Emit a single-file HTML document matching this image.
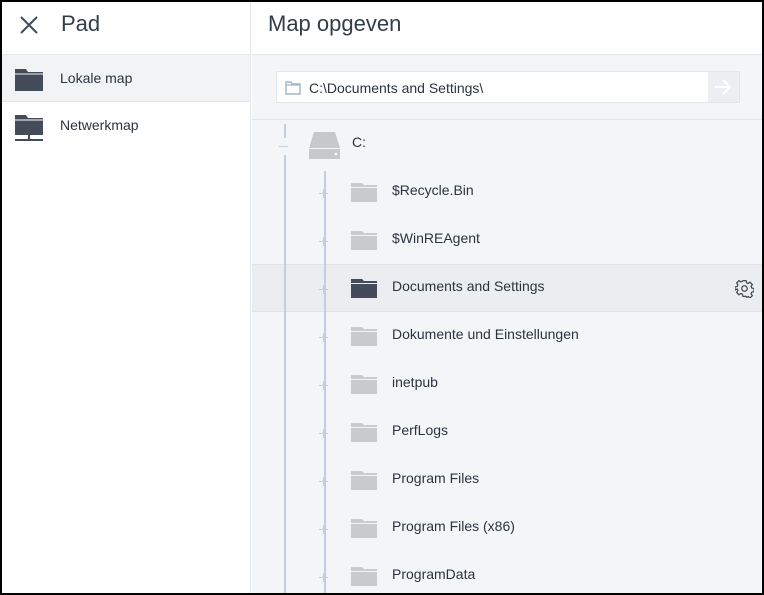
<!DOCTYPE html><html><head><style>
*{margin:0;padding:0;box-sizing:border-box}
body{width:764px;height:595px;overflow:hidden;background:#000;font-family:"Liberation Sans",sans-serif;color:#2a3440}
#w{position:absolute;left:2px;top:2px;width:760px;height:591px;background:#fff;overflow:hidden}
#l{position:absolute;left:0;top:0;width:249px;height:591px;background:#fff;border-right:1px solid #e2e5e9}
#r{position:absolute;left:250px;top:0;width:510px;height:591px;background:#f4f5f7}
.h{height:53px;border-bottom:1px solid #e2e5e9;background:#fff;position:relative}
.ttl{position:absolute;top:9px;font-size:22px;color:#333d48}
.li{height:47px;border-bottom:1px solid #e2e5e9;position:relative;font-size:14px}
.li span{position:absolute;left:58px;top:15px}
.row{position:absolute;left:0;width:510px;height:48px;font-size:14px}
.row span{position:absolute;left:140px;top:14px}
.fo{position:absolute;left:99px;top:15px;width:26px;height:19px}
.plus{position:absolute;left:67px;top:21px;width:9px;height:9px;z-index:3}
.plus:before{content:"";position:absolute;left:4px;top:0;width:1px;height:9px;background:#c3cee0}
.plus:after{content:"";position:absolute;left:0;top:4px;width:9px;height:1px;background:#c3cee0}
.ln{position:absolute;background:#c3cee0;z-index:2}
</style></head><body><div id="w">
<div id="l">
<div class="h"><svg style="position:absolute;left:17px;top:13px" width="20" height="20" viewBox="0 0 20 20"><path d="M2 2L18 18M18 2L2 18" stroke="#434c57" stroke-width="2"/></svg><div class="ttl" style="left:59px">Pad</div></div>
<div class="li" style="background:#f2f3f5"><svg style="position:absolute;left:12px;top:13px" width="30" height="24" viewBox="0 0 30 24"><path d="M1 1h11l2 3h15v19H1z" fill="#434c58"/><path d="M1 6h28" stroke="#f2f3f5" stroke-width="1"/></svg><span>Lokale map</span></div>
<div class="li" style="border:none"><svg style="position:absolute;left:12px;top:12px" width="30" height="28" viewBox="0 0 30 28"><path d="M1 1h11l2 3h15v17H1z" fill="#434c58"/><path d="M1 6h28" stroke="#fff"/><path d="M15 21v4M1 26h28" stroke="#434c58" stroke-width="2"/></svg><span>Netwerkmap</span></div>
</div>
<div id="r">
<div class="h"><div class="ttl" style="left:16px">Map opgeven</div></div>
<div style="position:absolute;left:0;top:53px;width:510px;height:65px;border-bottom:1px solid #e0e3e7">
<div style="position:absolute;left:24px;top:16px;width:464px;height:32px;background:#fff;border:1px solid #e2e5e9">
<svg style="position:absolute;left:8px;top:9px" width="16" height="14" viewBox="0 0 16 14"><path d="M1 1h5l1 2h8v10H1z" fill="none" stroke="#9fb3cf" stroke-width="1.4"/><path d="M1 4h14" stroke="#9fb3cf" stroke-width="1.2"/></svg>
<span style="position:absolute;left:32px;top:8px;font-size:14px">C:\Documents and Settings\</span>
<div style="position:absolute;right:0;top:0;width:31px;height:30px;background:#eceef1"><svg style="position:absolute;left:6px;top:6px" width="18" height="18" viewBox="0 0 18 18"><path d="M1 9h15M9 2l7 7-7 7" fill="none" stroke="#fff" stroke-width="2"/></svg></div>
</div></div>
<div class="ln" style="left:32px;top:122px;width:2px;height:14px"></div>
<div class="ln" style="left:27px;top:144px;width:9px;height:1px"></div>
<div class="ln" style="left:32px;top:153px;width:2px;height:440px"></div>
<div class="ln" style="left:72px;top:169px;width:2px;height:424px"></div>
<div class="row" style="top:118px"><svg style="position:absolute;left:56px;top:12px" width="33" height="27" viewBox="0 0 33 27"><path d="M6 0h21l5 16H1z" fill="#c6c8cc"/><rect x="1" y="17" width="31" height="10" fill="#c6c8cc"/><circle cx="28" cy="22" r="1.3" fill="#fff"/></svg><span style="left:100px">C:</span></div>
<div class="row" style="top:166px"><div class="plus"></div><svg class="fo" viewBox="0 0 26 19"><path d="M0 0h11l2 2h13v17H0z" fill="#c8cacd"/><path d="M0 4.5h26" stroke="#f4f5f7"/></svg><span>$Recycle.Bin</span></div>
<div class="row" style="top:214px"><div class="plus"></div><svg class="fo" viewBox="0 0 26 19"><path d="M0 0h11l2 2h13v17H0z" fill="#c8cacd"/><path d="M0 4.5h26" stroke="#f4f5f7"/></svg><span>$WinREAgent</span></div>
<div class="row" style="top:262px;background:#ebedf0;border-top:1px solid #e0e3e7;border-bottom:1px solid #e0e3e7"><div class="plus" style="top:20px"></div><svg class="fo" style="top:14px" viewBox="0 0 26 19"><path d="M0 0h11l2 2h13v17H0z" fill="#434c58"/><path d="M0 4.5h26" stroke="#ebedf0"/></svg><span style="top:13px">Documents and Settings</span><svg style="position:absolute;left:483px;top:14px" width="19" height="19" viewBox="0 0 24 24"><path d="M10 2h4l.6 2.8 2 .9 2.4-1.6 2.9 2.9-1.6 2.4.9 2 2.8.6v4l-2.8.6-.9 2 1.6 2.4-2.9 2.9-2.4-1.6-2 .9L14 22h-4l-.6-2.8-2-.9L5 19.9 2.1 17l1.6-2.4-.9-2L0 14v-4l2.8-.6.9-2L2.1 5 5 2.1l2.4 1.6 2-.9z" fill="none" stroke="#434c58" stroke-width="1.6"/><circle cx="12" cy="12" r="3.5" fill="none" stroke="#434c58" stroke-width="1.6"/></svg></div>
<div class="row" style="top:310px"><div class="plus"></div><svg class="fo" viewBox="0 0 26 19"><path d="M0 0h11l2 2h13v17H0z" fill="#c8cacd"/><path d="M0 4.5h26" stroke="#f4f5f7"/></svg><span>Dokumente und Einstellungen</span></div>
<div class="row" style="top:358px"><div class="plus"></div><svg class="fo" viewBox="0 0 26 19"><path d="M0 0h11l2 2h13v17H0z" fill="#c8cacd"/><path d="M0 4.5h26" stroke="#f4f5f7"/></svg><span>inetpub</span></div>
<div class="row" style="top:406px"><div class="plus"></div><svg class="fo" viewBox="0 0 26 19"><path d="M0 0h11l2 2h13v17H0z" fill="#c8cacd"/><path d="M0 4.5h26" stroke="#f4f5f7"/></svg><span>PerfLogs</span></div>
<div class="row" style="top:454px"><div class="plus"></div><svg class="fo" viewBox="0 0 26 19"><path d="M0 0h11l2 2h13v17H0z" fill="#c8cacd"/><path d="M0 4.5h26" stroke="#f4f5f7"/></svg><span>Program Files</span></div>
<div class="row" style="top:502px"><div class="plus"></div><svg class="fo" viewBox="0 0 26 19"><path d="M0 0h11l2 2h13v17H0z" fill="#c8cacd"/><path d="M0 4.5h26" stroke="#f4f5f7"/></svg><span>Program Files (x86)</span></div>
<div class="row" style="top:550px"><div class="plus"></div><svg class="fo" viewBox="0 0 26 19"><path d="M0 0h11l2 2h13v17H0z" fill="#c8cacd"/><path d="M0 4.5h26" stroke="#f4f5f7"/></svg><span>ProgramData</span></div>
</div>
</div></body></html>
